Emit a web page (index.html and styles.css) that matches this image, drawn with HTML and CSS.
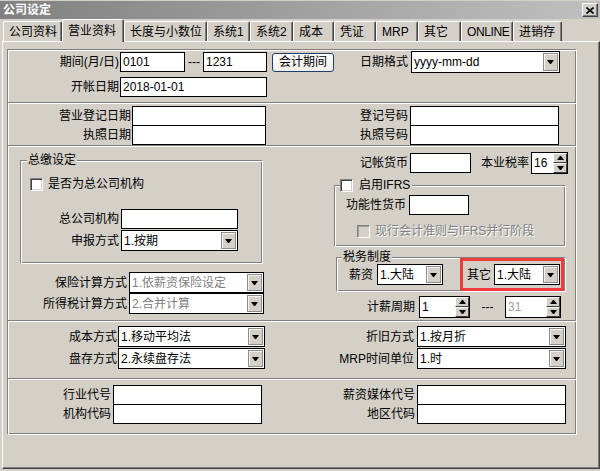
FILE: index.html
```html
<!DOCTYPE html>
<html lang="zh">
<head>
  <meta charset="UTF-8" />
  <title>公司设定</title>
  <link rel="stylesheet" href="styles.css">
</head>
<body>
  <div class="titlebar">
    <span class="title">公司设定</span>
    <span class="close">
      <svg width="8" height="7" viewBox="0 0 8 7"><path d="M0.5 0.5 L7.5 6.5 M7.5 0.5 L0.5 6.5" stroke="#000" stroke-width="1.6" fill="none"/></svg>
    </span>
  </div>

  <!-- TABS -->
  <div class="tabs">
    <div class="tab">公司资料</div>
    <div class="tab active">营业资料</div>
    <div class="tab">长度与小数位</div>
    <div class="tab">系统1</div>
    <div class="tab">系统2</div>
    <div class="tab">成本</div>
    <div class="tab">凭证</div>
    <div class="tab">MRP</div>
    <div class="tab">其它</div>
    <div class="tab">ONLINE</div>
    <div class="tab">进销存</div>
  </div>

  <div class="panel">
    <div class="frame">

      <!-- PERIOD -->
      <div class="sec sec1">
        <div class="row h22">
          <span class="lbl l112">期间(月/日)</span>
          <span class="box w65">0101</span>
          <span class="dash d18">---</span>
          <span class="box w64">1231</span>
          <span class="btn">会计期间</span>
          <span class="lbl l77">日期格式</span>
          <span class="sel w149 h22"><span>yyyy-mm-dd</span><span class="drop"></span></span>
        </div>
        <div class="row h20 gap4">
          <span class="lbl l112">开帐日期</span>
          <span class="box w147">2018-01-01</span>
        </div>
      </div>

      <!-- REGISTRATION -->
      <div class="sec sec2">
        <div class="row h20">
          <span class="lbl l124">营业登记日期</span>
          <span class="box w134"></span>
          <span class="lbl l144">登记号码</span>
          <span class="box w149"></span>
        </div>
        <div class="row h20 stack">
          <span class="lbl l124">执照日期</span>
          <span class="box w134"></span>
          <span class="lbl l144">执照号码</span>
          <span class="box w149"></span>
        </div>
      </div>

      <!-- TAX -->
      <div class="sec sec3">
        <div class="col-l">
          <fieldset class="grp grp-zj">
            <legend>总缴设定</legend>
            <div class="row chkrow">
              <span class="chk"></span>
              <span class="chk-text">是否为总公司机构</span>
            </div>
            <div class="row h20 hq">
              <span class="lbl l100">总公司机构</span>
              <span class="box w117"></span>
            </div>
            <div class="row h21 gap1">
              <span class="lbl l100">申报方式</span>
              <span class="sel w117"><span>1.按期</span><span class="drop"></span></span>
            </div>
          </fieldset>
          <div class="row h21 ins">
            <span class="lbl l121">保险计算方式</span>
            <span class="sel w135 dis"><span>1.依薪资保险设定</span><span class="drop"></span></span>
          </div>
          <div class="row h21">
            <span class="lbl l121">所得税计算方式</span>
            <span class="sel w135 dis"><span>2.合并计算</span><span class="drop"></span></span>
          </div>
        </div>

        <div class="col-r">
          <div class="row h22 cur">
            <span class="lbl l80">记帐货币</span>
            <span class="box w61"></span>
            <span class="lbl l60">本业税率</span>
            <span class="spin w37"><span class="spin-val">16</span><span class="spin-btns"><span class="sb up"></span><span class="sb down"></span></span></span>
          </div>

          <fieldset class="grp grp-ifrs">
            <legend><span class="chk"></span><span>启用IFRS</span></legend>
            <div class="row h20 fc">
              <span class="lbl l74">功能性货币</span>
              <span class="box w60"></span>
            </div>
            <div class="row parallel">
              <span class="chk off"></span>
              <span class="chk-text dis-text">现行会计准则与IFRS并行阶段</span>
            </div>
          </fieldset>

          <fieldset class="grp grp-tax">
            <legend>税务制度</legend>
            <div class="row taxrow">
              <span class="tax-lbl">薪资</span>
              <span class="sel w66"><span>1.大陆</span><span class="drop"></span></span>
              <div class="hl">
                <span class="tax-lbl">其它</span>
                <span class="sel w66"><span>1.大陆</span><span class="drop"></span></span>
              </div>
            </div>
          </fieldset>

          <div class="row h22 cycle">
            <span class="lbl l89">计薪周期</span>
            <span class="spin w51"><span class="spin-val">1</span><span class="spin-btns"><span class="sb up"></span><span class="sb down"></span></span></span>
            <span class="dash d35">---</span>
            <span class="spin w56"><span class="spin-val dis-val">31</span><span class="spin-btns"><span class="sb up"></span><span class="sb down"></span></span></span>
          </div>
        </div>
      </div>

      <!-- COSTING -->
      <div class="sec sec4">
        <div class="row h21">
          <span class="lbl l110">成本方式</span>
          <span class="sel w147"><span>1.移动平均法</span><span class="drop"></span></span>
          <span class="lbl l152">折旧方式</span>
          <span class="sel w149"><span>1.按月折</span><span class="drop"></span></span>
        </div>
        <div class="row h21 gap1">
          <span class="lbl l110">盘存方式</span>
          <span class="sel w147"><span>2.永续盘存法</span><span class="drop"></span></span>
          <span class="lbl l152">MRP时间单位</span>
          <span class="sel w149"><span>1.时</span><span class="drop"></span></span>
        </div>
      </div>

      <!-- CODES -->
      <div class="sec sec5">
        <div class="row h20">
          <span class="lbl l105">行业代号</span>
          <span class="box w149"></span>
          <span class="lbl l155">薪资媒体代号</span>
          <span class="box w149"></span>
        </div>
        <div class="row h20 stack">
          <span class="lbl l105">机构代码</span>
          <span class="box w149"></span>
          <span class="lbl l155">地区代码</span>
          <span class="box w149"></span>
        </div>
      </div>

    </div>
  </div>
</body>
</html>
```

FILE: styles.css
```css
:root {
  --face: #d4d0c8;
  --shadow: #808080;
  --dark: #404040;
  --light: #ffffff;
  --mark: #ee3b3b;
}
* {
  margin: 0;
  padding: 0;
  box-sizing: border-box;
}
body {
  width: 600px;
  height: 471px;
  overflow: hidden;
  background: var(--face);
  color: #000;
  font: 12px/14px "Liberation Sans", "Noto Sans CJK SC", sans-serif;
}

/* Title bar */
.titlebar {
  margin-top: 1px;
  height: 18px;
  display: flex;
  align-items: center;
  justify-content: space-between;
  padding: 0 2px 0 3px;
  background: linear-gradient(to right, #808080, #c0c0c0);
}
.title {
  color: #fff;
  font-weight: bold;
}
.close {
  width: 16px;
  height: 14px;
  display: flex;
  align-items: center;
  justify-content: center;
  background: var(--face);
  border: 1px solid;
  border-color: var(--light) var(--dark) var(--dark) var(--light);
  box-shadow: inset -1px -1px var(--shadow);
}

/* Tabs */
.tabs {
  display: flex;
  align-items: flex-end;
  height: 22px;
  padding-left: 3px;
}
.tab {
  height: 20px;
  padding-left: 5px;
  display: flex;
  align-items: center;
  white-space: nowrap;
  border: 1px solid var(--light);
  border-right-color: var(--dark);
  border-bottom: 0;
  border-radius: 2px 2px 0 0;
  box-shadow: inset -1px 0 var(--shadow);
}
.tab.active {
  height: 23px;
  margin-bottom: -1px;
  position: relative;
  z-index: 1;
  background: var(--face);
}
.tab:nth-child(1) { width: 59px; }
.tab:nth-child(2) { width: 62px; }
.tab:nth-child(3) { width: 83px; }
.tab:nth-child(4) { width: 43px; }
.tab:nth-child(5) { width: 43px; }
.tab:nth-child(6) { width: 41px; }
.tab:nth-child(7) { width: 42px; }
.tab:nth-child(8) { width: 42px; }
.tab:nth-child(9) { width: 43px; }
.tab:nth-child(10) { width: 52px; letter-spacing: -0.4px; }
.tab:nth-child(11) { width: 49px; }

/* Tab page */
.panel {
  margin-left: 2px;
  width: 598px;
  height: 428px;
  padding: 7px 0 0 4px;
  border: 1px solid;
  border-color: var(--light) var(--dark) var(--dark) var(--light);
  box-shadow: inset -1px -1px var(--shadow);
}
.frame {
  width: 570px;
  height: 386px;
  border: 1px solid;
  border-color: var(--shadow) var(--light) var(--light) var(--shadow);
  box-shadow: inset 1px 1px var(--light), inset -1px -1px var(--shadow);
}
.sec + .sec {
  border-top: 1px solid var(--shadow);
  box-shadow: inset 0 1px var(--light);
}
.sec1 { height: 52px; padding-top: 1px; }
.sec2 { height: 43px; padding-top: 3px; }
.sec3 { height: 175px; display: flex; }
.sec4 { height: 58px; padding-top: 5px; }
.sec5 { height: 56px; padding-top: 6px; }

/* Rows and labels */
.row {
  display: flex;
  align-items: center;
}
.h20 { height: 20px; }
.h21 { height: 21px; }
.h22 { height: 22px; }
.gap1 { margin-top: 1px; }
.gap4 { margin-top: 4px; }
.stack { margin-top: -1px; }
.lbl {
  flex: none;
  text-align: right;
  padding-right: 2px;
  white-space: nowrap;
}
.l60 { width: 60px; }
.l74 { width: 74px; padding-right: 3px; }
.l77 { width: 77px; padding-right: 3px; }
.l80 { width: 80px; }
.l89 { width: 89px; padding-right: 4px; }
.l100 { width: 100px; }
.l105 { width: 105px; }
.l110 { width: 110px; padding-right: 1px; }
.l112 { width: 112px; padding-right: 1px; }
.l121 { width: 121px; }
.l124 { width: 124px; padding-right: 1px; }
.l144 { width: 144px; }
.l152 { width: 152px; padding-right: 3px; }
.l155 { width: 155px; }
.dash {
  flex: none;
  text-align: center;
}
.d18 { width: 18px; }
.d35 { width: 35px; }

/* Controls */
.box,
.sel,
.spin {
  flex: none;
  display: flex;
  align-items: center;
  background: #fff;
  border: 1px solid #000;
  white-space: nowrap;
}
.box {
  height: 20px;
  padding: 0 2px;
}
.sel {
  height: 21px;
  padding-left: 2px;
  justify-content: space-between;
}
.sel.h22 { height: 22px; }
.sel.dis { color: var(--shadow); }
.drop {
  width: 15px;
  height: calc(100% - 2px);
  margin: 1px 1px auto 0;
  display: flex;
  align-items: center;
  justify-content: center;
  background: var(--face);
  border: 1px solid #8c8c8c;
  box-shadow: inset 1px 1px #f4f3ef;
}
.drop::after,
.sb::after {
  content: "";
  width: 1px;
  border-left: 3px solid transparent;
  border-right: 3px solid transparent;
}
.drop::after,
.sb.down::after {
  border-top: 4px solid #000;
}
.sb.up::after {
  border-bottom: 4px solid #000;
}
.w37 { width: 37px; }
.w51 { width: 51px; }
.w56 { width: 56px; }
.w60 { width: 60px; }
.w61 { width: 61px; }
.w64 { width: 64px; }
.w65 { width: 65px; }
.w66 { width: 66px; }
.w117 { width: 117px; }
.w134 { width: 134px; }
.w135 { width: 135px; }
.w147 { width: 147px; }
.w149 { width: 149px; }

.btn {
  flex: none;
  width: 62px;
  height: 19px;
  margin-left: 5px;
  display: flex;
  align-items: center;
  justify-content: center;
  border: 1px solid #1c3f6e;
  border-radius: 3px;
  background: linear-gradient(#ffffff, #f0efea);
}

.spin {
  height: 22px;
  padding-left: 2px;
  justify-content: space-between;
}
.spin-val.dis-val { color: #a0a0a0; }
.spin-btns {
  width: 14px;
  height: 100%;
  display: flex;
  flex-direction: column;
}
.sb {
  flex: 1;
  display: flex;
  align-items: center;
  justify-content: center;
  background: var(--face);
  border: 1px solid;
  border-color: var(--light) var(--dark) var(--dark) var(--light);
}

.chk {
  flex: none;
  width: 13px;
  height: 13px;
  background: #fff;
  border: 1px solid;
  border-color: var(--shadow) var(--light) var(--light) var(--shadow);
  box-shadow: inset 1px 1px var(--dark), inset -1px -1px var(--face);
}
.chk.off {
  background: var(--face);
  box-shadow: inset 1px 1px #a0a0a0, inset -1px -1px var(--face);
}
.chk-text { margin-left: 5px; }
.dis-text {
  color: var(--shadow);
  text-shadow: 1px 1px #fff;
}

/* Group boxes */
.grp {
  min-width: 0;
  padding: 0;
  border: 1px solid;
  border-color: var(--shadow) var(--light) var(--light) var(--shadow);
  box-shadow: inset 1px 1px var(--light), inset -1px -1px var(--shadow);
}
.grp legend {
  line-height: 12px;
  padding: 0 1px;
  margin-left: 6px;
  background: var(--face);
}

.col-l { width: 322px; flex: none; }
.col-r { flex: 1; }

.grp-zj {
  width: 243px;
  margin: 8px 0 0 12px;
  padding-bottom: 12px;
}
.chkrow { margin: 11px 0 0 9px; }
.hq { margin-top: 18px; }
.ins { margin-top: 8px; }

.cur { margin-top: 6px; }
.grp-ifrs {
  width: 232px;
  margin: 5px 0 0 4px;
  padding-bottom: 8px;
}
.grp-ifrs legend {
  display: flex;
  align-items: center;
  gap: 6px;
  line-height: 13px;
  padding: 0 2px 0 0;
  margin-left: 5px;
}
.fc { margin-top: 3px; }
.parallel { margin: 9px 0 0 22px; }

.grp-tax {
  width: 230px;
  margin: 4px 0 0 6px;
}
.grp-tax legend { margin-left: 5px; }
.taxrow {
  height: 33px;
  margin-top: -5px;
  padding-left: 12px;
}
.tax-lbl {
  flex: none;
  padding-right: 4px;
}
.hl {
  flex: none;
  width: 104px;
  height: 33px;
  margin-left: 17px;
  padding-left: 4px;
  display: flex;
  align-items: center;
  border: 3px solid var(--mark);
}
.hl .tax-lbl { padding-right: 3px; }
.cycle { margin-top: 4px; }
```
